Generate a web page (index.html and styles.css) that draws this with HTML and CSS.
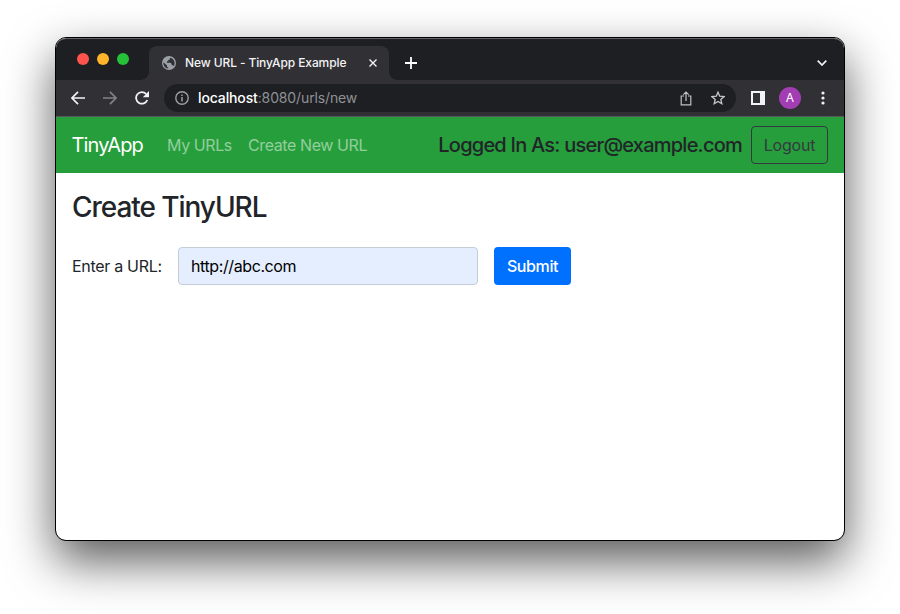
FILE: index.html
```html
<!DOCTYPE html>
<html lang="en">
<head>
<meta charset="utf-8">
<title>New URL - TinyApp Example</title>
<link rel="stylesheet" href="styles.css">
</head>
<body>
<div class="window">
  <div class="tabstrip">
    <div class="lights"><i class="red"></i><i class="yellow"></i><i class="green"></i></div>
    <div class="tab">
      <svg class="globe" width="14" height="14" viewBox="0 0 14 14"><circle cx="7" cy="7" r="7" fill="#9aa0a6"/><path d="M8.700 1.700 7.800 2.500v1.300H6.300v1.500H4.900v1.400h3.500l1.300 1.200v1.300h1.200l1 .8c1.200-2.300.8-4.700-.7-6.500Q10.100 2.200 8.700 1.700ZM1.500 6.200l3.500 3.300v1.200l1.200 1v.8C3.200 12.200 1 9.500 1.500 6.200Z" fill="#313035"/></svg>
      <span class="tab-title">New URL - TinyApp Example</span>
      <svg class="close" width="8" height="8" viewBox="0 0 8 8"><path d="m.5.5 7 7m0-7-7 7" stroke="#f1f3f4" stroke-width="1.400"/></svg>
    </div>
    <svg class="plus" width="12" height="12" viewBox="0 0 12 12"><path d="M6 0v12M0 6h12" stroke="#fff" stroke-width="1.800"/></svg>
    <svg class="chevron" width="10" height="6" viewBox="0 0 10 6"><path d="m.7.7 4.300 4.300L9.300.7" fill="none" stroke="#f1f3f4" stroke-width="1.700"/></svg>
  </div>
  <div class="toolbar">
    <svg class="back" width="14" height="14" viewBox="0 0 14 14"><path d="M14 7H1.500M7 .8.900 7 7 13.200" fill="none" stroke="#f1f3f4" stroke-width="1.700"/></svg>
    <svg class="forward" width="14" height="14" viewBox="0 0 14 14"><path d="M0 7h12.500M7 .8 13.100 7 7 13.200" fill="none" stroke="#828387" stroke-width="1.700"/></svg>
    <svg class="reload" width="14" height="14" viewBox="0 0 14 14"><path d="M12.300 9A5.800 5.800 0 1 1 11.200 3" fill="none" stroke="#f1f3f4" stroke-width="1.800"/><path d="M14 0v6.200H7.800Z" fill="#f1f3f4"/></svg>
    <div class="address">
      <svg width="14" height="14" viewBox="0 0 14 14"><circle cx="7" cy="7" r="6.200" fill="none" stroke="#9aa0a6" stroke-width="1.400"/><path d="M7 6v4.500M7 3.400V5" stroke="#9aa0a6" stroke-width="1.500"/></svg>
      <span class="url"><b>localhost</b>:8080/urls/new</span>
      <svg class="share" width="12" height="15" viewBox="0 0 12 15"><path d="M4 5H1.200v8.900h9.600V5H8M6 10V1.200M3.300 3.700 6 1l2.700 2.700" fill="none" stroke="#bdc1c6" stroke-width="1.200"/></svg>
      <svg class="star" width="14" height="14" viewBox="0 0 14 14"><path d="m7 1.200 1.700 4 4.400.4-3.300 2.900 1 4.200L7 10.500l-3.800 2.200 1-4.200L.9 5.600l4.400-.4Z" fill="none" stroke="#c5c8cc" stroke-width="1.300"/></svg>
    </div>
    <svg class="panel" width="14" height="14" viewBox="0 0 14 14"><path d="M0 0h14v14H0ZM2 2v10h7V2Z" fill="#f1f3f4" fill-rule="evenodd"/></svg>
    <div class="avatar">A</div>
    <svg class="dots" width="4" height="14" viewBox="0 0 4 14" fill="#f1f3f4"><circle cx="2" cy="2" r="1.600"/><circle cx="2" cy="7" r="1.600"/><circle cx="2" cy="12" r="1.600"/></svg>
  </div>
  <nav class="navbar">
    <a class="brand">TinyApp</a>
    <a class="link my">My URLs</a>
    <a class="link create">Create New URL</a>
    <span class="logged">Logged In As: user@example.com</span>
    <button class="btn logout">Logout</button>
  </nav>
  <main>
    <h1>Create TinyURL</h1>
    <form>
      <label for="url">Enter a URL:</label>
      <input id="url" type="text" value="http://abc.com">
      <button class="btn submit" type="button">Submit</button>
    </form>
  </main>
</div>
</body>
</html>
```
FILE: styles.css
```css
* { box-sizing: border-box; }
html { background: #fff; }
body { margin: 0; padding: 37px 0 0 55px; width: 900px; height: 614px; overflow: hidden; font: 16px/24px Inter, "Liberation Sans", sans-serif; color: #212529; }
svg { display: block; flex: none; }
span, a, label { white-space: nowrap; }
.window { width: 790px; height: 504px; border: 1px solid #000; border-radius: 11px; background: #fff; box-shadow: 0 20px 48px rgba(0, 0, 0, .65); background-clip: padding-box; }
.tabstrip { height: 42px; background: #1e1f23; border-top: 1px solid #636467; border-radius: 10px 10px 0 0; display: flex; align-items: center; padding: 7px 17px 0 21px; }
.lights { display: flex; gap: 8px; margin-top: -9px; }
.lights i { width: 12px; height: 12px; border-radius: 50%; }
.red { background: #ff544d; }
.yellow { background: #ffb429; }
.green { background: #25c138; }
.tab { position: relative; width: 240px; height: 34px; margin-left: 20px; background: #313035; border-radius: 8px 8px 0 0; display: flex; align-items: center; padding: 0 12px 0 13px; }
.tab::before, .tab::after { content: ""; position: absolute; bottom: 0; width: 8px; height: 8px; }
.tab::before { left: -8px; background: radial-gradient(circle at 0 0, transparent 7.5px, #313035 8px); }
.tab::after { right: -8px; background: radial-gradient(circle at 100% 0, transparent 7.5px, #313035 8px); }
.tab-title { margin-left: 9px; font-size: 12px; font-weight: 500; color: #f1f3f4; letter-spacing: -.1px; }
.close { margin-left: auto; }
.plus { margin-left: 16px; }
.chevron { margin-left: auto; }
.toolbar { height: 37px; background: #313035; border-bottom: 1px solid #56575a; display: flex; align-items: center; padding: 0 19px 0 15px; }
.forward, .reload { margin-left: 18px; }
.address { width: 572px; height: 28px; margin-left: 15px; padding: 0 11px; border-radius: 14px; background: #1e1f23; display: flex; align-items: center; }
.url { margin-left: 9px; font-size: 14px; color: #8f9195; letter-spacing: -.13px; }
.url b { font-weight: 500; color: #fff; }
.share { margin-left: auto; }
.star { margin-left: 19px; }
.panel { margin-left: 15px; }
.avatar { width: 22px; height: 22px; margin-left: 14px; border-radius: 50%; background: #a23db4; color: #fff; font-size: 12px; line-height: 22px; text-align: center; }
.dots { margin-left: auto; }
.navbar { height: 56px; background: #259e3b; display: flex; align-items: center; padding: 0 16px; }
.brand { width: 71px; margin-right: 24px; font-size: 20px; color: #fff; letter-spacing: -.85px; text-indent: -.5px; }
.link { color: rgba(255, 255, 255, .5); }
.my { width: 65px; margin-right: 16px; letter-spacing: -.4px; }
.create { letter-spacing: -.4px; }
.logged { margin-left: auto; font-size: 20px; font-weight: 500; letter-spacing: -.77px; }
.btn { width: 77px; height: 38px; padding: 0; border-radius: 4px; font: inherit; }
.logout { margin-left: 9px; border: 1px solid #343a40; background: transparent; color: #343a40; letter-spacing: -.2px; }
main { padding: 17px 16px; }
h1 { margin: 0; font-size: 28px; line-height: 34px; font-weight: 500; letter-spacing: -1.05px; }
form { display: flex; align-items: center; margin-top: 23px; }
label { width: 106px; letter-spacing: -.3px; }
input { width: 300px; height: 38px; padding: 0 12px; border: 1px solid #c4ccd6; border-radius: 4px; background: #e5eeff; color: #000; font: inherit; letter-spacing: -.4px; }
.submit { margin-left: 16px; border: 0; background: #0070ff; color: #fff; font-weight: 500; letter-spacing: -.4px; }
```
